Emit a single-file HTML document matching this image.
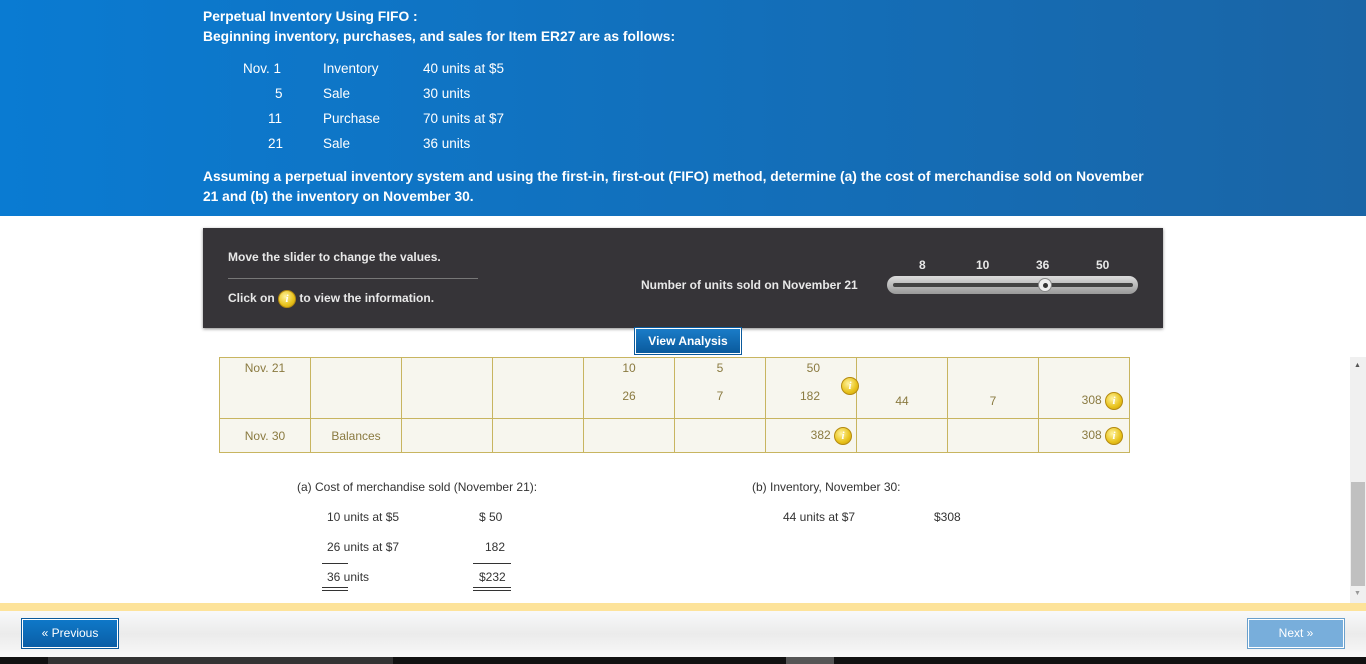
<!DOCTYPE html>
<html><head><style>
*{margin:0;padding:0;box-sizing:border-box}
body{width:1366px;height:664px;overflow:hidden;background:#fff;font-family:"Liberation Sans",sans-serif;position:relative}
.hdr{position:absolute;left:0;top:0;width:1366px;height:216px;background:linear-gradient(90deg,#0a7bd2,#1a65a6);color:#fff}
.a{position:absolute;white-space:nowrap}
.hdr .b{font-weight:bold;font-size:13.8px}
.hdr .n{font-size:13.5px}
.panel{position:absolute;left:203px;top:228px;width:960px;height:100px;background:#363438;box-shadow:0 1px 3px #888;color:#e8e8e8;font-size:12px;font-weight:bold}
.info{display:inline-block;width:18px;height:18px;border-radius:50%;background:radial-gradient(circle at 40% 35%,#fff3a0,#e8c21a 60%,#c69a10);border:1px solid #b48a10;color:#fff;font-style:italic;font-family:"Liberation Serif",serif;font-size:11px;text-align:center;line-height:16px;font-weight:bold}
table{position:absolute;left:219px;top:357px;border-collapse:collapse;background:#f7f6ee;font-size:12px;color:#8a7a40}
td{border:1px solid #c8b560;width:91px;vertical-align:top;padding:3px 6px}
.r{text-align:right}
.c{text-align:center}
.btn{position:absolute;color:#fff;font-size:12px;font-weight:bold;text-align:center;border:1px solid #fff;outline:1px solid #0a5a9c}
.lines{position:absolute;font-size:12px;color:#333}
</style></head><body>
<div class="hdr">
<div class="a b" style="left:203px;top:9px">Perpetual Inventory Using FIFO :</div>
<div class="a b" style="left:203px;top:29px">Beginning inventory, purchases, and sales for Item ER27 are as follows:</div>
<div class="a n" style="left:243px;top:61px">Nov. 1</div><div class="a n" style="left:323px;top:61px">Inventory</div><div class="a n" style="left:423px;top:61px">40 units at $5</div>
<div class="a n" style="left:275px;top:86px">5</div><div class="a n" style="left:323px;top:86px">Sale</div><div class="a n" style="left:423px;top:86px">30 units</div>
<div class="a n" style="left:268px;top:111px">11</div><div class="a n" style="left:323px;top:111px">Purchase</div><div class="a n" style="left:423px;top:111px">70 units at $7</div>
<div class="a n" style="left:268px;top:136px">21</div><div class="a n" style="left:323px;top:136px">Sale</div><div class="a n" style="left:423px;top:136px">36 units</div>
<div class="a b" style="left:203px;top:169px">Assuming a perpetual inventory system and using the first-in, first-out (FIFO) method, determine (a) the cost of merchandise sold on November</div>
<div class="a b" style="left:203px;top:189px">21 and (b) the inventory on November 30.</div>
</div>
<div class="panel">
<div class="a" style="left:25px;top:22px">Move the slider to change the values.</div>
<div class="a" style="left:25px;top:50px;width:250px;border-top:1px solid #777"></div>
<div class="a" style="left:25px;top:62px">Click on <span class="info" style="vertical-align:middle">i</span> to view the information.</div>
<div class="a" style="left:438px;top:50px">Number of units sold on November 21</div>
<div class="a" style="left:716px;top:30px">8</div><div class="a" style="left:773px;top:30px">10</div><div class="a" style="left:833px;top:30px">36</div><div class="a" style="left:893px;top:30px">50</div>
<div class="a" style="left:684px;top:48px;width:251px;height:18px;border-radius:9px;background:linear-gradient(#ddd,#999);"></div>
<div class="a" style="left:690px;top:55px;width:240px;height:4px;border-radius:2px;background:#444"></div>
<div class="a" style="left:835px;top:50px;width:14px;height:14px;border-radius:50%;background:#eee;border:1px solid #888"></div>
<div class="a" style="left:840px;top:55px;width:5px;height:5px;border-radius:50%;background:#333"></div>
</div>
<div class="btn" style="left:635px;top:328px;width:106px;height:26px;line-height:24px;background:linear-gradient(#1a7cc8,#0a5a9c)">View Analysis</div>
<table>
<tr style="height:61px"><td class="c">Nov. 21</td><td></td><td></td><td></td><td class="c">10<br><br>26</td><td class="c">5<br><br>7</td><td class="r" style="position:relative;padding-right:36px">50<br><br>182<span class="info" style="position:absolute;left:75px;top:19px">i</span></td><td class="c" style="vertical-align:bottom;padding-bottom:10px">44</td><td class="c" style="vertical-align:bottom;padding-bottom:10px">7</td><td class="r" style="vertical-align:bottom;padding-bottom:8px">308 <span class="info" style="vertical-align:middle">i</span></td></tr>
<tr style="height:34px"><td class="c" style="vertical-align:middle">Nov. 30</td><td class="c" style="vertical-align:middle">Balances</td><td></td><td></td><td></td><td></td><td class="r" style="vertical-align:middle;padding-right:4px">382 <span class="info" style="vertical-align:middle">i</span></td><td></td><td></td><td class="r" style="vertical-align:middle">308 <span class="info" style="vertical-align:middle">i</span></td></tr>
</table>
<div class="lines">
<div class="a" style="left:297px;top:480px">(a) Cost of merchandise sold (November 21):</div>
<div class="a" style="left:327px;top:510px">10 units at $5</div><div class="a" style="left:479px;top:510px">$ 50</div>
<div class="a" style="left:327px;top:540px">26 units at $7</div><div class="a" style="left:485px;top:540px">182</div>
<div class="a" style="left:322px;top:563px;width:26px;border-top:1px solid #333"></div><div class="a" style="left:473px;top:563px;width:38px;border-top:1px solid #333"></div>
<div class="a" style="left:327px;top:570px">36 units</div><div class="a" style="left:479px;top:570px">$232</div>
<div class="a" style="left:322px;top:587px;width:26px;height:4px;border-top:1px solid #333;border-bottom:1px solid #333"></div><div class="a" style="left:473px;top:587px;width:38px;height:4px;border-top:1px solid #333;border-bottom:1px solid #333"></div>
<div class="a" style="left:752px;top:480px">(b) Inventory, November 30:</div>
<div class="a" style="left:783px;top:510px">44 units at $7</div><div class="a" style="left:934px;top:510px">$308</div>
</div>
<div class="a" style="left:1350px;top:357px;width:16px;height:246px;background:#f0f0f0"></div>
<div class="a" style="left:1351px;top:482px;width:14px;height:104px;background:#c0c0c0"></div>
<div class="a" style="left:1354px;top:362px;font-size:7px;color:#555">▲</div>
<div class="a" style="left:1354px;top:590px;font-size:7px;color:#999">▼</div>
<div class="a" style="left:0;top:603px;width:1366px;height:8px;background:#fde39a"></div>
<div class="a" style="left:0;top:611px;width:1366px;height:46px;background:linear-gradient(#f8f9fa,#ebebeb 50%,#f8f8f8)"></div>
<div class="btn" style="left:22px;top:619px;width:96px;height:29px;line-height:27px;background:linear-gradient(#0f78c8,#0a5ea6);font-weight:normal">« Previous</div>
<div class="btn" style="left:1248px;top:619px;width:96px;height:29px;line-height:27px;background:#78aedb;outline-color:#6aa0cc;font-weight:normal">Next »</div>
<div class="a" style="left:0;top:657px;width:1366px;height:7px;background:#111"></div>
<div class="a" style="left:48px;top:657px;width:345px;height:7px;background:#333"></div>
<div class="a" style="left:786px;top:657px;width:48px;height:7px;background:#555"></div>
</body></html>
